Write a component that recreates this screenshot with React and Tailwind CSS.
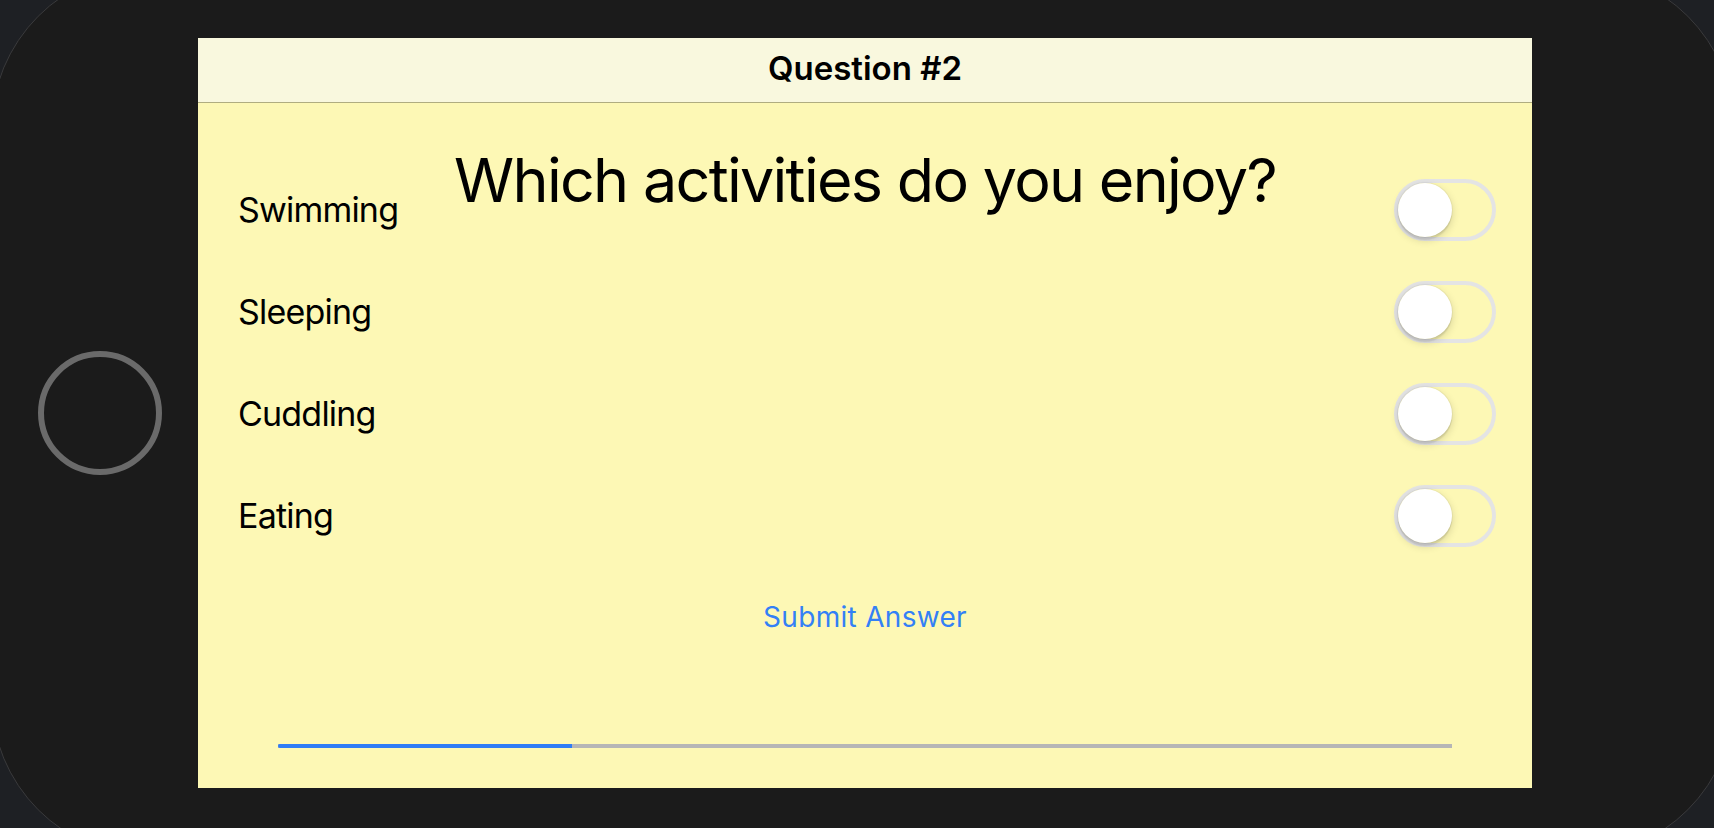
import React from "react";

const items = ["Swimming", "Sleeping", "Cuddling", "Eating"];

function Toggle() {
  return (
    <div className="w-[102px] h-[62px] rounded-full border-[4px] border-[#e4e4e4] flex items-center shrink-0">
      <div className="w-[54px] h-[54px] rounded-full bg-white shadow-[0_3px_8px_rgba(0,0,0,0.16),0_3px_1px_rgba(0,0,0,0.07),0_0_0_1px_rgba(0,0,0,0.04)]" />
    </div>
  );
}

export default function App() {
  return (
    <div
      className="h-[828px] w-full overflow-hidden bg-[#1e2024]"
      style={{ fontFamily: "Inter, 'Liberation Sans', sans-serif" }}
    >
      <div className="w-[1744px] h-[888px] -ml-[9px] -mt-[31px] rounded-[160px] border border-[#3a3a3c] bg-[#1b1b1b] flex items-center pl-[46px] gap-[36px]">
        <div className="w-[124px] h-[124px] rounded-full border-[6px] border-[#6a6a6a] shrink-0" />
        <div className="w-[1334px] h-[750px] flex flex-col bg-[#fdf8b5] shrink-0">
          <div className="h-[65px] flex items-center justify-center pb-[3px] bg-[#f9f8de] border-b border-[#b0ad80] shrink-0">
            <span className="text-[33px] leading-none font-semibold text-black">Question #2</span>
          </div>
          <div className="flex-1 flex flex-col">
            <div className="grid">
              <div className="col-start-1 row-start-1 justify-self-center self-start pt-[47px]">
                <span className="text-[61px] leading-none text-black tracking-[-1.7px]">
                  Which activities do you enjoy?
                </span>
              </div>
              <div className="col-start-1 row-start-1 flex flex-col gap-[40px] pt-[76px] pl-[40px] pr-[36px]">
                {items.map((t) => (
                  <div key={t} className="h-[62px] flex items-center justify-between">
                    <span className="text-[34px] leading-none text-black tracking-[-0.8px]">{t}</span>
                    <Toggle />
                  </div>
                ))}
              </div>
            </div>
            <div className="flex justify-center pt-[56px]">
              <span className="text-[28px] leading-none text-[#3380f6] tracking-[0.3px]">Submit Answer</span>
            </div>
            <div className="flex-1" />
            <div className="px-[80px] pb-[40px]">
              <div className="h-[4px] bg-[#b6b6b6] flex">
                <div className="w-[25%] h-full bg-[#2f7df6] rounded-l-full" />
              </div>
            </div>
          </div>
        </div>
      </div>
    </div>
  );
}
